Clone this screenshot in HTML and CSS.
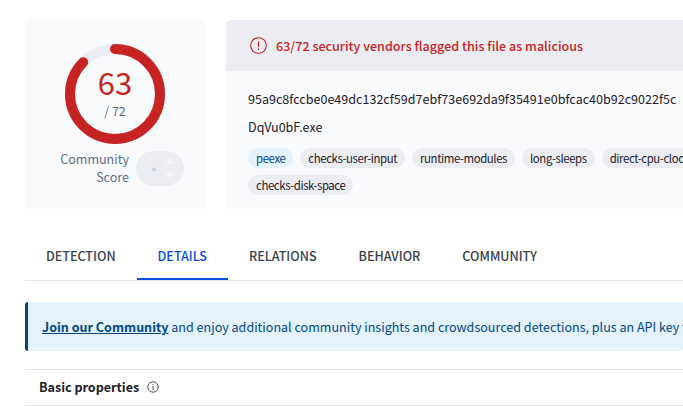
FILE: index.html
```html
<!DOCTYPE html>
<html lang="en">
<head>
<meta charset="utf-8">
<title>File report</title>
<link rel="stylesheet" href="styles.css">
</head>
<body>
<main class="page">
  <section class="summary">
    <div class="score-card">
      <div class="gauge">
        <svg class="gauge-ring" viewBox="0 0 100 100" width="100" height="100">
          <circle class="ring-track" cx="50" cy="50" r="45"/>
          <circle class="ring-value" cx="50" cy="50" r="45" pathLength="72" stroke-dasharray="63 72" transform="rotate(-90 50 50)"/>
        </svg>
        <div class="gauge-text">
          <span class="positives">63</span>
          <span class="total">/ 72</span>
        </div>
      </div>
      <div class="community">
        <div class="community-label">Community<br>Score</div>
        <svg class="vote" viewBox="0 0 48 35" width="48" height="35">
          <rect class="vote-bg" width="48" height="35" rx="17.5"/>
          <circle class="vote-dot" cx="18" cy="18.5" r="2"/>
          <path class="vote-arrow" d="M29 13l5-5 5 5zM29 22l5 5 5-5z"/>
        </svg>
      </div>
    </div>
    <div class="file-card">
      <div class="verdict">
        <svg class="alert" viewBox="0 0 18 18" width="18" height="18">
          <circle cx="8.5" cy="8.5" r="7.8"/>
          <path d="M8.5 4.2v6M8.5 11.5v1.5"/>
        </svg>
        <span>63/72 security vendors flagged this file as malicious</span>
      </div>
      <div class="file-info">
        <div class="hash">95a9c8fccbe0e49dc132cf59d7ebf73e692da9f35491e0bfcac40b92c9022f5c</div>
        <div class="name">DqVu0bF.exe</div>
        <div class="tags">
          <span class="tag tag-type">peexe</span>
          <span class="tag">checks-user-input</span>
          <span class="tag">runtime-modules</span>
          <span class="tag">long-sleeps</span>
          <span class="tag">direct-cpu-clock-access</span>
        </div>
        <div class="tags">
          <span class="tag">checks-disk-space</span>
        </div>
      </div>
    </div>
  </section>
  <nav class="tabs">
    <a class="tab">DETECTION</a>
    <a class="tab active">DETAILS</a>
    <a class="tab">RELATIONS</a>
    <a class="tab">BEHAVIOR</a>
    <a class="tab">COMMUNITY</a>
  </nav>
  <div class="banner"><a class="join">Join our Community</a> and enjoy additional community insights and crowdsourced detections, plus an API key to automate checks.</div>
  <div class="section-head">
    <span class="section-title">Basic properties</span>
    <svg class="info" viewBox="0 0 12 12" width="12" height="12">
      <circle cx="6" cy="6" r="5.2"/>
      <path d="M6 5v4M6 3v1"/>
    </svg>
  </div>
</main>
</body>
</html>
```
FILE: styles.css
```css
body {
  margin: 0;
  background: #fff;
  color: #1d2028;
  font-family: "Noto Sans CJK JP", "Noto Sans", sans-serif;
  font-size: 12.55px;
  overflow: hidden;
}
.page { height: 407px; padding: 19px 0 0 25px; box-sizing: border-box; overflow: hidden; white-space: nowrap; }
.summary { display: flex; gap: 21px; height: 191px; }
.score-card {
  display: flex; flex-direction: column; align-items: center;
  width: 180px; box-sizing: border-box; padding-top: 25px;
  background: #f9fafc; border-radius: 5px; flex: none;
}
.gauge { display: grid; width: 100px; height: 100px; }
.gauge-ring, .gauge-text { grid-area: 1 / 1; }
.ring-track { fill: none; stroke: #ecedf3; stroke-width: 10; }
.ring-value { fill: none; stroke: #c62422; stroke-width: 10; stroke-linecap: round; }
.gauge-text { display: flex; flex-direction: column; align-items: center; padding-top: 21px; }
.positives { color: #c62422; font-size: 31px; line-height: 34px; }
.total { color: #606b85; line-height: 24px; }
.community { display: flex; gap: 7px; width: 124px; justify-content: flex-end; margin: 7px 0 0 14px; color: #606b85; }
.community-label { text-align: right; line-height: 18px; margin-top: -1px; }
.vote { flex: none; }
.vote-bg { fill: #ecedf3; }
.vote-dot { fill: #d0d3df; }
.vote-arrow { fill: #f5f6f9; }
.file-card { flex: none; width: 470px; background: #f9fafc; border-radius: 5px 0 0 5px; overflow: hidden; margin-top: 1px; }
.verdict {
  display: flex; align-items: center; gap: 8px; height: 51px; padding-left: 24px;
  background: #ecedf3; color: #c62422; font-weight: 500; letter-spacing: 0.01px;
}
.alert { fill: none; stroke: #c62422; stroke-width: 1.1; }
.file-info { padding: 14px 0 0 22px; }
.hash, .name { height: 28px; line-height: 28px; }
.name { margin-bottom: 7px; }
.tags { display: flex; gap: 7px; height: 20px; margin-bottom: 7px; }
.tag {
  padding: 0 8px; border-radius: 10px; background: #ecedf3;
  font-size: 11.4px; letter-spacing: -0.4px; line-height: 21px; flex: none;
}
.tag-type { background: #e3f2fd; color: #024684; }
.tabs { display: flex; height: 70px; align-items: flex-end; border-bottom: 1px solid #e2e5ec; }
.tab { height: 47px; box-sizing: border-box; padding: 0 21px; line-height: 46px; font-weight: 500; color: #393f4b; }
.tab.active { color: #0b4dda; border-bottom: 2px solid #0b4dda; }
.banner {
  height: 49px; margin-top: 21px; padding-left: 14px; line-height: 50px;
  border-left: 3px solid #024684; border-radius: 3px; background: #e3f2fd; color: #024684;
}
.join { font-weight: 700; text-decoration: underline; }
.section-head {
  display: flex; align-items: center; gap: 8px; height: 35px; margin-top: 18px; padding-left: 14px;
  border-top: 1px solid #e2e5ec; border-bottom: 1px solid #e2e5ec; font-weight: 700;
}
.section-title { line-height: 18px; padding-bottom: 1px; }
.info { fill: none; stroke: #555; stroke-width: 1; margin-bottom: 1px; }
```
